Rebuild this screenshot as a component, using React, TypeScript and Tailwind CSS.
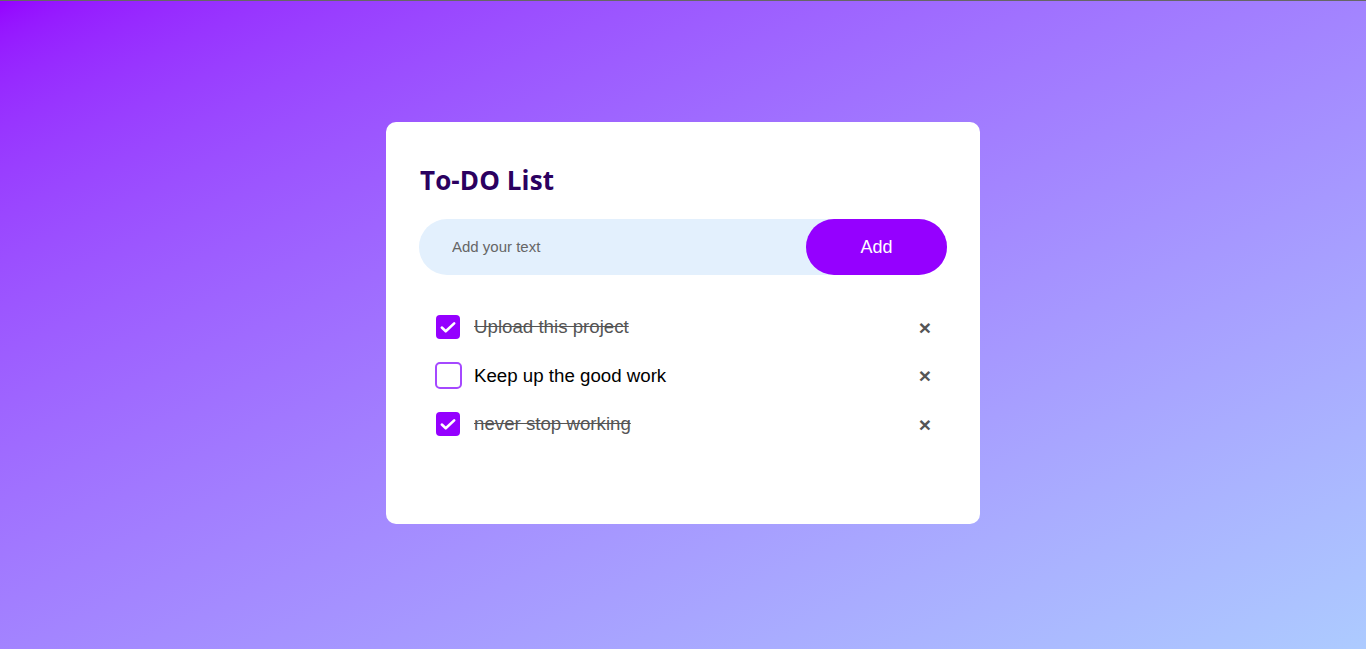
import { useState } from "react";

type Todo = { id: number; text: string; done: boolean };

const CheckBox = ({ checked }: { checked: boolean }) =>
  checked ? (
    <span className="flex h-6 w-6 items-center justify-center rounded-[4px] bg-[#9500ff]">
      <svg width="18" height="18" viewBox="0 0 16 16" fill="none">
        <path d="M2.5 8.5l3.5 3.3 7.5-7" stroke="white" strokeWidth="2.3" strokeLinecap="round" strokeLinejoin="round" />
      </svg>
    </span>
  ) : (
    <span className="-mx-[1.5px] block h-[27px] w-[27px] rounded-[5px] border-2 border-[#a548ff] bg-white" />
  );

const TodoRow = ({ todo, onToggle, onDelete }: { todo: Todo; onToggle: () => void; onDelete: () => void }) => (
  <li className="flex h-[48.5px] items-center pl-[17px] pr-[16px] cursor-pointer" onClick={onToggle}>
    <CheckBox checked={todo.done} />
    <span className={`ml-[14px] flex-1 text-[18.7px] ${todo.done ? "text-[#555] line-through" : "text-black"}`}>{todo.text}</span>
    <button
      onClick={(e) => {
        e.stopPropagation();
        onDelete();
      }}
      className="text-[21px] font-bold leading-none text-[#555]"
    >
      ×
    </button>
  </li>
);

export default function App() {
  const [todos, setTodos] = useState<Todo[]>([
    { id: 1, text: "Upload this project", done: true },
    { id: 2, text: "Keep up the good work", done: false },
    { id: 3, text: "never stop working", done: true },
  ]);
  const [text, setText] = useState("");

  const add = () => {
    if (!text.trim()) return;
    setTodos([...todos, { id: Date.now(), text, done: false }]);
    setText("");
  };

  return (
    <div className="flex min-h-[649px] w-full flex-col bg-gradient-to-br from-[#9500ff] to-[#adcbff] font-['Liberation_Sans',Arial,sans-serif]">
      <div className="h-px bg-[#666]" />
      <div className="flex justify-center pt-[121px]">
        <div className="h-[402px] w-[594px] rounded-[10px] bg-white px-[33px] pt-[40px]">
          <h2 className="ml-px font-['Open_Sans',sans-serif] text-[26px] leading-[36px] font-bold tracking-[0.1px] text-[#2b0060]">To-DO List</h2>
          <div className="mt-[21px] flex h-14 items-center rounded-full bg-[#e3f0fd]">
            <input
              value={text}
              onChange={(e) => setText(e.target.value)}
              placeholder="Add your text"
              className="flex-1 bg-transparent pl-[33px] text-[15px] text-black outline-none placeholder:text-[#666]"
            />
            <button onClick={add} className="h-14 w-[141px] rounded-full bg-[#9500ff] text-[18px] text-white">
              Add
            </button>
          </div>
          <ul className="mt-[28px]">
            {todos.map((t) => (
              <TodoRow
                key={t.id}
                todo={t}
                onToggle={() => setTodos(todos.map((x) => (x.id === t.id ? { ...x, done: !x.done } : x)))}
                onDelete={() => setTodos(todos.filter((x) => x.id !== t.id))}
              />
            ))}
          </ul>
        </div>
      </div>
    </div>
  );
}
